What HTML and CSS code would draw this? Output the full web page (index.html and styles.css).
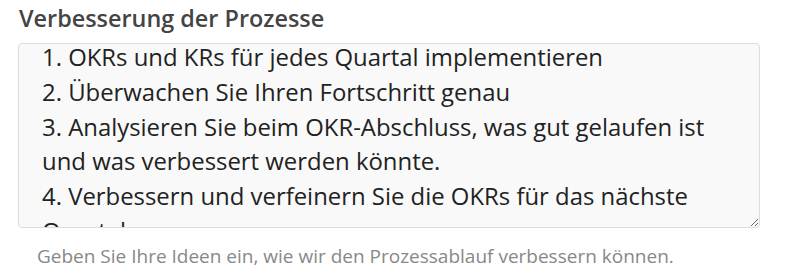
FILE: index.html
```html
<!DOCTYPE html>
<html lang="de">
<head>
<meta charset="utf-8">
<title>Verbesserung der Prozesse</title>
<link rel="stylesheet" href="styles.css">
</head>
<body>
<div class="field">
  <label class="field-label" for="improve">Verbesserung der Prozesse</label>
  <textarea class="field-input" id="improve">1. OKRs und KRs für jedes Quartal implementieren
2. Überwachen Sie Ihren Fortschritt genau
3. Analysieren Sie beim OKR-Abschluss, was gut gelaufen ist und was verbessert werden könnte.
4. Verbessern und verfeinern Sie die OKRs für das nächste Quartal.</textarea>
  <p class="field-help">Geben Sie Ihre Ideen ein, wie wir den Prozessablauf verbessern können.</p>
</div>
<script src="script.js"></script>
</body>
</html>
```
FILE: styles.css
```css
html, body {
  margin: 0;
  padding: 0;
  background: #ffffff;
}
body {
  font-family: "Open Sans", "Noto Sans", sans-serif;
}
.field {
  display: flex;
  flex-direction: column;
  align-items: flex-start;
  padding: 4px 0 0 18px;
}
.field-label {
  display: block;
  font-size: 23.4px;
  line-height: 28px;
  font-weight: 600;
  color: #444444;
  margin: 0 0 0 1px;
}
.field-input {
  box-sizing: border-box;
  width: 742px;
  height: 185px;
  margin: 11px 0 0 0;
  padding: 0 32px 0 23px;
  border: 1px solid #dcdcdc;
  border-radius: 4px;
  background: #f9f9f9;
  font-family: "Open Sans", "Noto Sans", sans-serif;
  font-size: 23.9px;
  line-height: 34.75px;
  color: #222222;
  resize: vertical;
  overflow: hidden;
  outline: none;
}
.field-help {
  margin: 16px 0 0 19px;
  font-size: 19px;
  line-height: 24px;
  color: #888888;
}
```
FILE: script.js
```js
document.getElementById('improve').scrollTop = 4;
```
